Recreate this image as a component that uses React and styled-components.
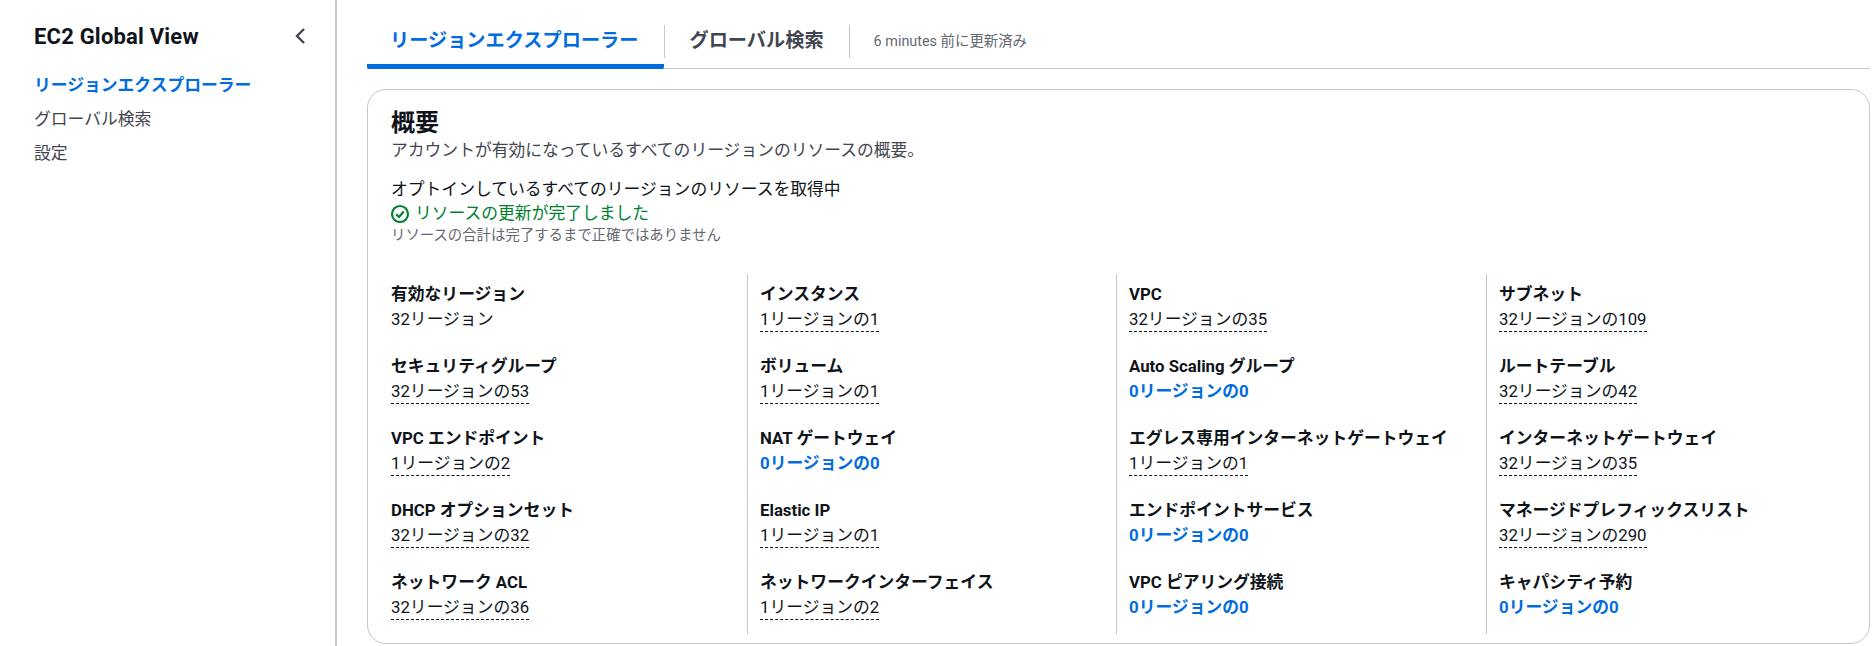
import React from "react";
import styled, { createGlobalStyle } from "styled-components";

const rows = [
  ["有効なリージョン", "32リージョン", "plain"],
  ["インスタンス", "1リージョンの1"],
  ["VPC", "32リージョンの35"],
  ["サブネット", "32リージョンの109"],
  ["セキュリティグループ", "32リージョンの53"],
  ["ボリューム", "1リージョンの1"],
  ["Auto Scaling グループ", "0リージョンの0", "zero"],
  ["ルートテーブル", "32リージョンの42"],
  ["VPC エンドポイント", "1リージョンの2"],
  ["NAT ゲートウェイ", "0リージョンの0", "zero"],
  ["エグレス専用インターネットゲートウェイ", "1リージョンの1"],
  ["インターネットゲートウェイ", "32リージョンの35"],
  ["DHCP オプションセット", "32リージョンの32"],
  ["Elastic IP", "1リージョンの1"],
  ["エンドポイントサービス", "0リージョンの0", "zero"],
  ["マネージドプレフィックスリスト", "32リージョンの290"],
  ["ネットワーク ACL", "32リージョンの36"],
  ["ネットワークインターフェイス", "1リージョンの2"],
  ["VPC ピアリング接続", "0リージョンの0", "zero"],
  ["キャパシティ予約", "0リージョンの0", "zero"],
];

export default function App() {
  return (
    <Page>
      <GlobalStyle />
      <Sidebar>
        <SideHeader>
          <SideTitle>EC2 Global View</SideTitle>
          <Collapse width="20" height="20" viewBox="0 0 20 20">
            <path d="M13 3 L6 10 L13 17" />
          </Collapse>
        </SideHeader>
        <Nav>
          <NavItem $active>リージョンエクスプローラー</NavItem>
          <NavItem>グローバル検索</NavItem>
          <NavItem>設定</NavItem>
        </Nav>
      </Sidebar>
      <Main>
        <TabBar>
          <Tab $active>リージョンエクスプローラー</Tab>
          <TabDivider />
          <Tab>グローバル検索</Tab>
          <TabDivider />
          <Updated>6 minutes 前に更新済み</Updated>
        </TabBar>
        <Card>
          <Heading>概要</Heading>
          <Description>アカウントが有効になっているすべてのリージョンのリソースの概要。</Description>
          <Status>
            <StatusLabel>オプトインしているすべてのリージョンのリソースを取得中</StatusLabel>
            <Success>
              <svg width="20" height="20" viewBox="0 0 20 20" fill="none" stroke="#00802f" strokeWidth="2.2">
                <circle cx="10" cy="10" r="8" />
                <path d="M6.2 10.2 L9 13 L13.8 7.6" />
              </svg>
              リソースの更新が完了しました
            </Success>
            <Hint>リソースの合計は完了するまで正確ではありません</Hint>
          </Status>
          <Grid>
            {rows.map(([label, value, kind], i) => (
              <Cell key={label} $first={i % 4 === 0}>
                <Label>{label}</Label>
                <Value $kind={kind}>{value}</Value>
              </Cell>
            ))}
          </Grid>
        </Card>
      </Main>
    </Page>
  );
}

const GlobalStyle = createGlobalStyle`
  html, body {
    margin: 0;
    background: #fff;
    overflow: hidden;
  }
  body {
    font-family: Roboto, "Noto Sans CJK JP", sans-serif;
    color: #0f141a;
  }
`;
const Page = styled.div`
  display: flex;
  height: 646px;
`;
const Sidebar = styled.aside`
  width: 337px;
  flex-shrink: 0;
  box-sizing: border-box;
  border-right: 2px solid #c6c6cd;
  padding: 21px 0 0 34px;
`;
const SideHeader = styled.div`
  display: flex;
  align-items: center;
  justify-content: space-between;
  height: 32px;
  padding-right: 24px;
`;
const SideTitle = styled.div`
  font-size: 22px;
  letter-spacing: 0.2px;
  font-weight: 700;
  line-height: 32px;
`;
const Collapse = styled.svg`
  fill: none;
  stroke: #424650;
  stroke-width: 2.4;
  margin-top: -2px;
`;
const Nav = styled.nav`
  display: flex;
  flex-direction: column;
  margin-top: 15px;
`;
const NavItem = styled.a`
  font-size: 16.8px;
  line-height: 34px;
  color: ${(p) => (p.$active ? "#006ce0" : "#424650")};
  font-weight: ${(p) => (p.$active ? 700 : 400)};
`;
const Main = styled.main`
  flex: 1;
  min-width: 0;
  padding: 0 2px 0 30px;
`;
const TabBar = styled.div`
  display: flex;
  align-items: flex-start;
  height: 69px;
  box-sizing: border-box;
  border-bottom: 1px solid #c6c6cd;
`;
const Tab = styled.div`
  box-sizing: border-box;
  height: 69px;
  padding: 25px ${(p) => (p.$active ? "26px 0 23px" : "25px 0 23px")};
  border-bottom: 5px solid ${(p) => (p.$active ? "#006ce0" : "transparent")};
  border-radius: 0 0 2px 2px;
  font-size: 19.2px;
  line-height: 32px;
  font-weight: 700;
  color: ${(p) => (p.$active ? "#006ce0" : "#424650")};
`;
const TabDivider = styled.div`
  width: 1px;
  height: 33px;
  margin: 25px 1px 0 0;
  background: #c6c6cd;
`;
const Updated = styled.div`
  font-size: 14.4px;
  line-height: 32px;
  margin: 26px 0 0 23px;
  color: #656871;
`;
const Card = styled.section`
  box-sizing: border-box;
  height: 555px;
  margin-top: 20px;
  padding: 19px 20px 0 23px;
  border: 1px solid #c6c6cd;
  border-radius: 19px;
`;
const Heading = styled.h2`
  margin: 0;
  font-size: 24px;
  line-height: 28px;
  font-weight: 700;
`;
const Description = styled.div`
  margin-top: -2px;
  font-size: 16.8px;
  line-height: 30px;
  color: #424650;
`;
const Status = styled.div`
  margin-top: 11px;
`;
const StatusLabel = styled.div`
  font-size: 16.8px;
  line-height: 26px;
`;
const Success = styled.div`
  display: flex;
  align-items: center;
  gap: 5px;
  margin-left: -1px;
  font-size: 16.8px;
  line-height: 23px;
  color: #00802f;
`;
const Hint = styled.div`
  margin-top: 1px;
  font-size: 14.4px;
  line-height: 20px;
  color: #656871;
`;
const Grid = styled.div`
  display: grid;
  grid-template-columns: 356px 369px 370px 1fr;
  grid-auto-rows: 72px;
  margin-top: 28px;
`;
const Cell = styled.div`
  box-sizing: border-box;
  padding: 7px 0 0 ${(p) => (p.$first ? 0 : 12)}px;
  border-left: ${(p) => (p.$first ? "none" : "1px solid #c6c6cd")};
`;
const Label = styled.div`
  font-size: 16.8px;
  line-height: 27px;
  font-weight: 700;
`;
const Value = styled.span`
  display: inline-block;
  font-size: 16.8px;
  line-height: 23px;
  color: ${(p) => (p.$kind === "zero" ? "#006ce0" : "#0f141a")};
  font-weight: ${(p) => (p.$kind === "zero" ? 700 : 400)};
  border-bottom: ${(p) => (p.$kind ? "none" : "1px dashed #0f141a")};
`;
